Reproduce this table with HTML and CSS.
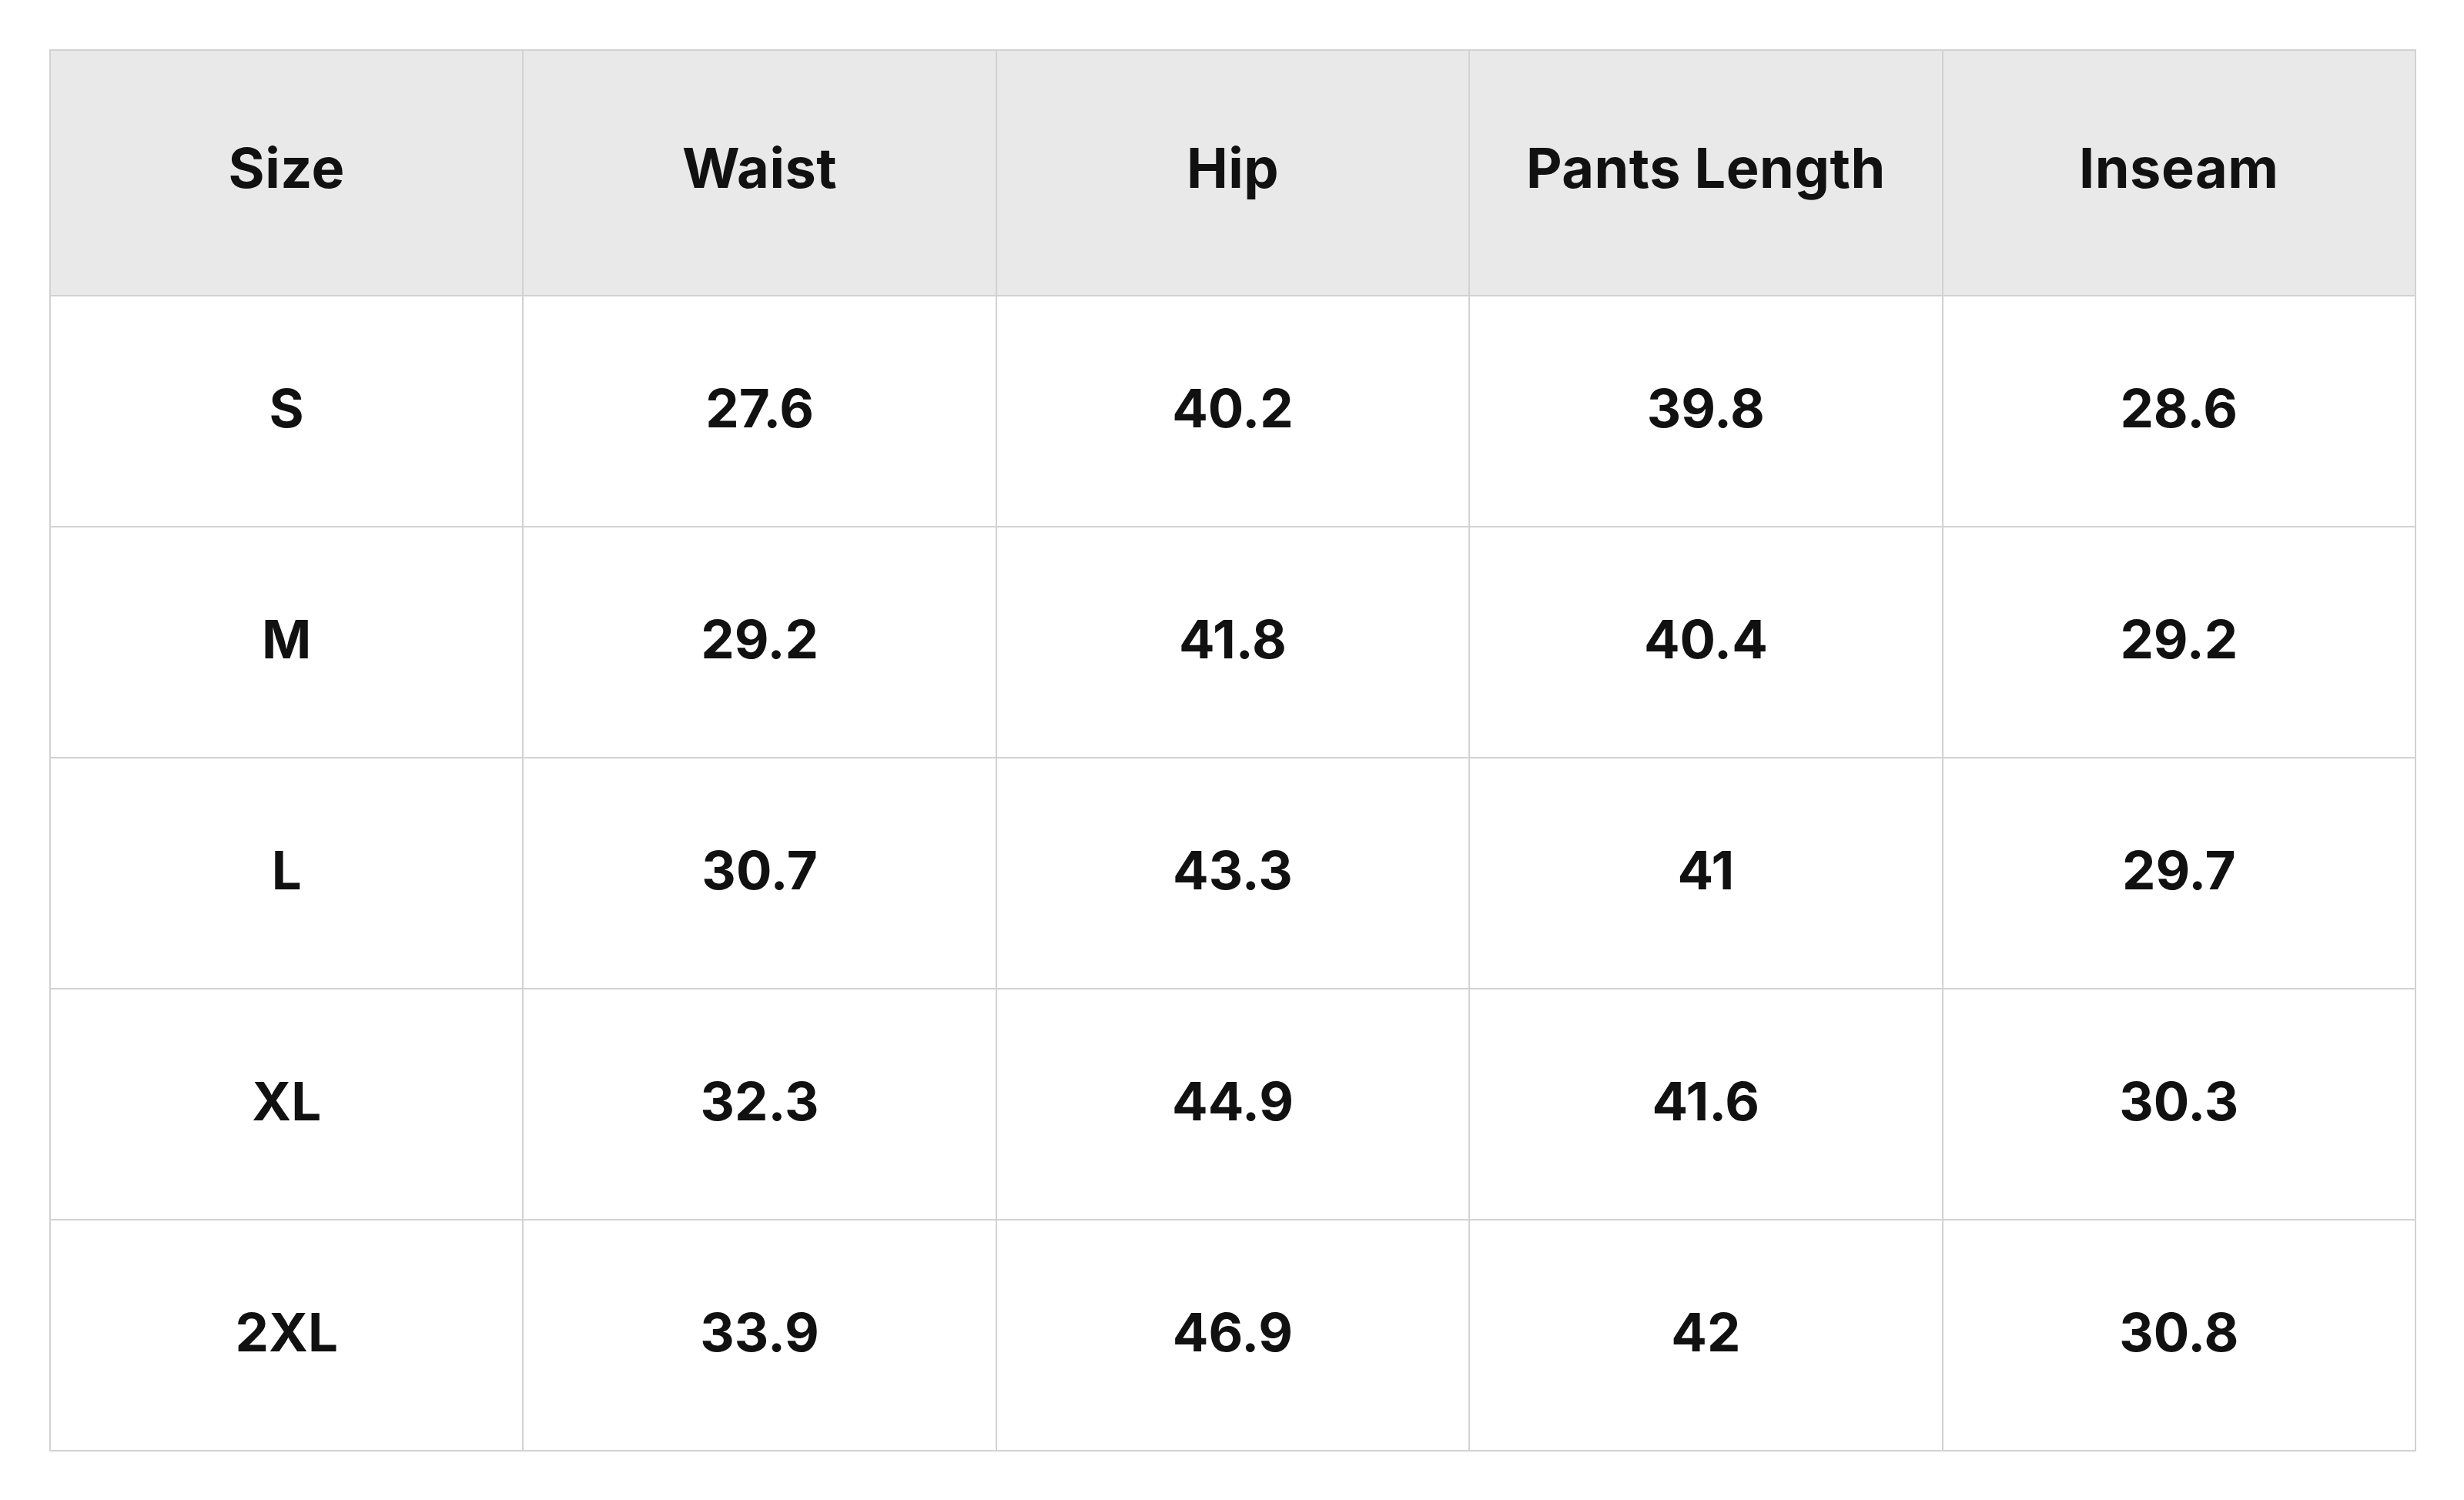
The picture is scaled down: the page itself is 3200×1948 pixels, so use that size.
FILE: index.html
```html
<!DOCTYPE html>
<html lang="en">
<head>
<meta charset="utf-8">
<title>Size Chart</title>
<link rel="stylesheet" href="styles.css">
</head>
<body>
<div class="page">
<table class="size-table">
<thead>
<tr><th>Size</th><th>Waist</th><th>Hip</th><th>Pants Length</th><th>Inseam</th></tr>
</thead>
<tbody>
<tr><td>S</td><td>27.6</td><td>40.2</td><td>39.8</td><td>28.6</td></tr>
<tr><td>M</td><td>29.2</td><td>41.8</td><td>40.4</td><td>29.2</td></tr>
<tr><td>L</td><td>30.7</td><td>43.3</td><td>41</td><td>29.7</td></tr>
<tr><td>XL</td><td>32.3</td><td>44.9</td><td>41.6</td><td>30.3</td></tr>
<tr><td>2XL</td><td>33.9</td><td>46.9</td><td>42</td><td>30.8</td></tr>
</tbody>
</table>
</div>
</body>
</html>
```

FILE: styles.css
```css
html, body {
  margin: 0;
  padding: 0;
  background: #ffffff;
}

.page {
  padding: 64px 0 0 64px;
}

.size-table {
  border-collapse: collapse;
  width: 3074px;
  table-layout: fixed;
  font-family: Inter, "Liberation Sans", sans-serif;
  color: #111111;
}

.size-table th,
.size-table td {
  border: 2px solid #d2d2d2;
  text-align: center;
  vertical-align: middle;
  font-weight: 700;
  padding: 0;
  line-height: 1.2;
}

.size-table th {
  background: #e9e9e9;
  font-size: 72px;
  letter-spacing: 0.5px;
  height: 305px;
  padding-bottom: 12px;
}

.size-table td {
  font-size: 69px;
  letter-spacing: 0;
  height: 290px;
  padding-bottom: 8px;
}
```
